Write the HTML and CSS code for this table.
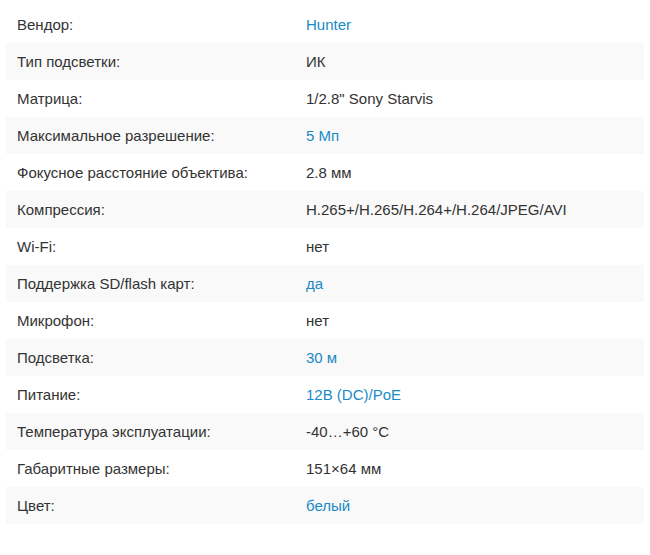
FILE: index.html
```html
<!DOCTYPE html>
<html lang="ru">
<head>
<meta charset="utf-8">
<link rel="stylesheet" href="styles.css">
</head>
<body>
<div class="specs">
  <div class="row"><div class="name">Вендор:</div><div class="val link">Hunter</div></div>
  <div class="row"><div class="name">Тип подсветки:</div><div class="val">ИК</div></div>
  <div class="row"><div class="name">Матрица:</div><div class="val">1/2.8" Sony Starvis</div></div>
  <div class="row"><div class="name">Максимальное разрешение:</div><div class="val link">5 Мп</div></div>
  <div class="row"><div class="name">Фокусное расстояние объектива:</div><div class="val">2.8 мм</div></div>
  <div class="row"><div class="name">Компрессия:</div><div class="val">H.265+/H.265/H.264+/H.264/JPEG/AVI</div></div>
  <div class="row"><div class="name">Wi-Fi:</div><div class="val">нет</div></div>
  <div class="row"><div class="name">Поддержка SD/flash карт:</div><div class="val link">да</div></div>
  <div class="row"><div class="name">Микрофон:</div><div class="val">нет</div></div>
  <div class="row"><div class="name">Подсветка:</div><div class="val link">30 м</div></div>
  <div class="row"><div class="name">Питание:</div><div class="val link">12В (DC)/PoE</div></div>
  <div class="row"><div class="name">Температура эксплуатации:</div><div class="val">-40…+60 °C</div></div>
  <div class="row"><div class="name">Габаритные размеры:</div><div class="val">151×64 мм</div></div>
  <div class="row"><div class="name">Цвет:</div><div class="val link">белый</div></div>
</div>
</body>
</html>
```
FILE: styles.css
```css
html, body {
  margin: 0;
  padding: 0;
  background: #fff;
}
body {
  padding: 6px 6px 0 6px;
  font-family: "Liberation Sans", Arial, sans-serif;
  font-size: 15px;
  color: #333;
}
.specs {
  width: 638px;
}
.row {
  display: grid;
  grid-template-columns: 300px 1fr;
  height: 37px;
  align-items: center;
}
.row:nth-child(even) {
  background: #f9f9f9;
}
.name {
  padding-left: 11px;
}
.link {
  color: #1a8ac6;
}
```
